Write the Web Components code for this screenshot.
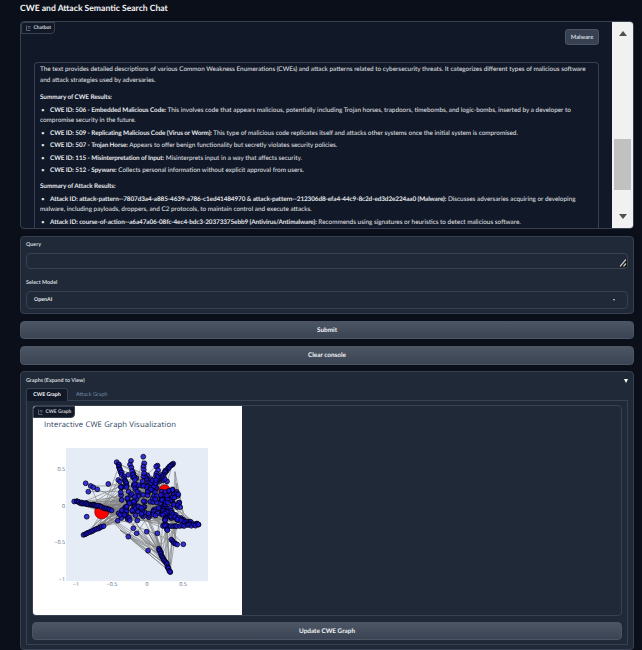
<!DOCTYPE html>
<html>
<head>
<meta charset="utf-8">
<title>CWE and Attack Semantic Search Chat</title>
<style>
  html, body { margin: 0; padding: 0; height: 650px; overflow: hidden; background: #0b0f19; }
  body { font-family: Lato, sans-serif; color: #e5e7eb; text-rendering: geometricPrecision; }
</style>
</head>
<body>
<search-app></search-app>

<script>
// small base class so every element just declares its css + markup
class ShadowEl extends HTMLElement {
  constructor() {
    super();
    this.shadow = this.attachShadow({ mode: 'open' });
  }
  connectedCallback() {
    this.shadow.innerHTML = `<style>${this.css()}</style>${this.html()}`;
  }
  css() { return ''; }
  html() { return '<slot></slot>'; }
}

class GrButton extends ShadowEl {
  css() {
    return `
      :host { display: block; }
      button {
        display: block; width: 100%; height: var(--h, 18px); padding: 0;
        font: 700 6.4px Lato, sans-serif; color: #f3f4f6; text-rendering: geometricPrecision;
        background: linear-gradient(to bottom, #4b5563, #3a4454);
        border: 1px solid #4b5563; border-radius: 4px;
      }
    `;
  }
  html() { return '<button><slot></slot></button>'; }
}

class GrLabelBadge extends ShadowEl {
  css() {
    return `
      :host {
        position: absolute; left: 0; top: 0; z-index: 2; display: flex; align-items: center; gap: 2.5px;
        box-sizing: border-box; height: 12px; padding: 0 3px 0 4px;
        background: #111827; border: 1px solid #374151;
        border-radius: 3px 0 4px 0;
        font: 700 4.9px Lato, sans-serif; color: #d1d5db;
      }
      svg { width: 5px; height: 6px; }
    `;
  }
  html() {
    return `<svg viewBox="0 0 5 6"><path d="M.5.5v5h4M1.8 1.5h2.7M1.8 3h2.7" fill="none" stroke="#6b7280" stroke-width=".8"/></svg><slot></slot>`;
  }
}

class ChatMessage extends ShadowEl {
  css() {
    return `
      :host {
        display: block; box-sizing: border-box; padding: 1px 5px 0;
        border: 1px solid #374151; border-bottom: 0; border-radius: 4px 4px 0 0;
        font: 400 6.4px/11px Lato, sans-serif; color: #e5e7eb;
        flex: 1; overflow: hidden;
      }
    `;
  }
}

class ChatPanel extends ShadowEl {
  css() {
    return `
      :host {
        display: flex; position: relative; height: 208px; box-sizing: border-box;
        background: #111827; border: 1px solid #374151; border-radius: 4px; overflow: hidden;
      }
      .body { flex: 1; display: flex; flex-direction: column; padding: 7px 13px 0 13px; min-width: 0; }
      .tools { display: flex; justify-content: flex-end; margin-bottom: 17px; }
      .tag {
        display: flex; align-items: center; justify-content: center;
        width: 34px; height: 16px; box-sizing: border-box;
        background: #374151; border: 1px solid #4b5563; border-radius: 3px;
        font: 700 5.8px Lato, sans-serif; color: #d1d5db;
      }
      .bar { width: 21px; flex: none; background: #f1f1f1; display: flex; flex-direction: column; align-items: center; }
      .arrow { width: 0; height: 0; border-left: 4.5px solid transparent; border-right: 4.5px solid transparent; }
      .up { border-bottom: 5px solid #505050; margin-top: 9px; }
      .down { border-top: 5px solid #505050; margin-top: 24px; }
      .thumb { width: 17px; height: 51px; background: #c1c1c1; margin-top: 103px; }
    `;
  }
  html() {
    return `
      <gr-label-badge><span>Chatbot</span></gr-label-badge>
      <div class="body">
        <div class="tools"><div class="tag">Malware</div></div>
        <slot></slot>
      </div>
      <div class="bar">
        <div class="arrow up"></div>
        <div class="thumb"></div>
        <div class="arrow down"></div>
      </div>
    `;
  }
}

class GrField extends ShadowEl {
  css() {
    return `
      :host { display: block; }
      label { display: block; font: 700 5.4px/8px Lato, sans-serif; color: #d1d5db; margin-bottom: 4px; }
      .box {
        display: flex; align-items: center; justify-content: space-between; position: relative;
        box-sizing: border-box; height: var(--h, 18px); padding: 0 7px;
        border: 1px solid #374151; border-radius: 4px; background: #1f2937;
        font: 700 5.3px Lato, sans-serif; color: #e5e7eb;
      }
      .caret { width: 0; height: 0; border-left: 1.8px solid transparent; border-right: 1.8px solid transparent; border-top: 2px solid #d1d5db; margin-right: 5px; }
      svg { position: absolute; right: 0; bottom: 1px; width: 10px; height: 9px; }
    `;
  }
  html() {
    const isSelect = this.hasAttribute('select');
    return `
      <label>${this.getAttribute('label')}</label>
      <div class="box">
        <span>${this.getAttribute('value') || ''}</span>
        ${isSelect ? '<div class="caret"></div>' :
          `<svg viewBox="0 0 10 9"><path d="M10 0v9H1z" fill="#111"/><path d="M3 8.5 9 1.5M6.5 8.5 9 5.5" stroke="#c8c8c8" stroke-width="1.2" fill="none"/></svg>`}
      </div>
    `;
  }
}

class GrCard extends ShadowEl {
  css() {
    return `
      :host {
        display: block; box-sizing: border-box; position: relative;
        background: #1f2937; border: 1px solid #374151; border-radius: 4px;
      }
    `;
  }
}

class GraphAccordion extends ShadowEl {
  css() {
    return `
      :host {
        display: flex; flex-direction: column; box-sizing: border-box; flex: 1; min-height: 0;
        background: #1f2937; border: 1px solid #374151; border-radius: 4px; padding: 3px 5px 4px;
      }
      .head { display: flex; justify-content: space-between; align-items: center; height: 11px; margin-bottom: 2px; font: 700 5.4px Lato, sans-serif; color: #d1d5db; }
      .tri { width: 0; height: 0; border-left: 2.8px solid transparent; border-right: 2.8px solid transparent; border-top: 4px solid #fff; }
      .tabs { display: flex; height: 13px; position: relative; z-index: 1; }
      .tab { display: flex; align-items: center; font: 700 5.2px Lato, sans-serif; }
      .tab.on { width: 42px; box-sizing: border-box; justify-content: center; height: 13px; background: #111827; color: #f9fafb; border: 1px solid #374151; border-bottom: 0; border-radius: 3px 3px 0 0; }
      .tab.off { color: #7088a8; font-size: 5.5px; font-weight: 400; padding-left: 8px; }
      .panel { flex: 1; box-sizing: border-box; border: 1px solid #374151; padding: 4px 5px 4px; display: flex; flex-direction: column; gap: 6px; margin-top: -1px; }
      .gallery { position: relative; height: 211px; box-sizing: border-box; border: 1px solid #374151; border-radius: 4px; overflow: hidden; }
    `;
  }
  html() {
    return `
      <div class="head"><span>Graphs (Expand to View)</span><div class="tri"></div></div>
      <div class="tabs"><div class="tab on">CWE Graph</div><div class="tab off">Attack Graph</div></div>
      <div class="panel">
        <div class="gallery">
          <gr-label-badge><span>CWE Graph</span></gr-label-badge>
          <slot></slot>
        </div>
        <gr-button style="--h:18px">Update CWE Graph</gr-button>
      </div>
    `;
  }
}

// the plotly figure, nodes are laid out from the strands seen in the graph
class CwePlot extends ShadowEl {
  css() {
    return `
      :host { display: block; width: 209px; height: 209px; background: #fff; }
      svg { display: block; }
      text { font-family: "Open Sans", "DejaVu Sans", sans-serif; }
    `;
  }
  html() {
    // deterministic rng
    let seed = 4217;
    const rnd = () => { seed = (seed * 16807) % 2147483647; return seed / 2147483647; };
    const pts = [];
    // coordinates below were read off a 3x crop, Z brings them to plot box px
    const Z = (p) => [p[0] / 3 - 46, p[1] / 3 - 48];
    const strand = (x1, y1, x2, y2, n, j) => {
      for (let i = 0; i < n; i++) {
        const t = n > 1 ? i / (n - 1) : 0;
        pts.push([x1 + (x2 - x1) * t + (rnd() - .5) * j, y1 + (y2 - y1) * t + (rnd() - .5) * j]);
      }
    };
    const blob = (cx, cy, rx, ry, n) => {
      for (let i = 0; i < n; i++) {
        const a = rnd() * Math.PI * 2, r = Math.sqrt(rnd());
        pts.push([cx + Math.cos(a) * r * rx, cy + Math.sin(a) * r * ry]);
      }
    };
    blob(395, 290, 75, 65, 95);
    blob(335, 340, 42, 24, 30);
    blob(330, 265, 30, 50, 22);
    blob(445, 305, 40, 40, 50);
    strand(165, 305, 232, 316, 22, 5);
    strand(232, 316, 275, 332, 10, 3);
    strand(190, 405, 250, 378, 13, 2);
    strand(292, 185, 320, 260, 16, 7);
    strand(330, 185, 345, 240, 7, 6);
    strand(458, 190, 405, 250, 22, 4);
    strand(412, 195, 410, 240, 7, 6);
    strand(372, 190, 372, 220, 4, 3);
    strand(440, 345, 535, 375, 28, 9);
    strand(430, 380, 535, 375, 16, 5);
    strand(425, 335, 480, 355, 16, 12);
    strand(430, 345, 440, 390, 12, 10);
    strand(415, 445, 450, 515, 18, 4);
    strand(455, 420, 470, 435, 5, 3);
    [[370,170],[197,250],[212,258],[220,262],[232,268],[205,275],[265,252],[200,350],[325,410],
     [384,452],[490,433],[350,400],[412,400],[380,395],[295,240],[300,245],[475,283],[450,515],
     [293,362],[340,385],[300,345],[305,300],[320,320]].forEach(p => pts.push(p));

    // keep the two red hubs readable, only a node or two sits on them
    const hubA = [245, 336], hubB = [434, 272];
    const clear = (p, h, r) => Math.hypot(p[0] - h[0], p[1] - h[1]) > r;
    const nodes = pts.filter(p => clear(p, [438, 266], 10) && clear(p, [248, 345], 10)).map(Z);
    const centre = nodes.slice(0, 140);

    const line = (a, b) => `<path d="M${a[0].toFixed(1)} ${a[1].toFixed(1)}L${b[0].toFixed(1)} ${b[1].toFixed(1)}"/>`;
    let edges = '';
    nodes.forEach((n, i) => {
      if (i % 3 === 0) edges += line(n, Z(i % 2 === 0 ? hubA : hubB));
      if (i % 2 === 0) edges += line(n, centre[Math.floor(rnd() * centre.length)]);
    });
    // the visible fans: lower left corner, bottom strand, right side
    [[190,405],[200,400],[215,395],[250,378]].forEach(a =>
      [[300,330],[290,350],[330,345],[270,330]].forEach(b => { edges += line(Z(a), Z(b)); }));
    [[450,515],[440,495],[425,465],[415,445]].forEach(a =>
      [[325,410],[350,395],[380,390],[405,395],[440,390],[470,380],[300,390]].forEach(b => { edges += line(Z(a), Z(b)); }));
    [[465,215],[470,250]].forEach(a =>
      [[490,340],[470,330],[450,515]].forEach(b => { edges += line(Z(a), Z(b)); }));

    const circles = nodes.map(n =>
      `<circle cx="${n[0].toFixed(1)}" cy="${n[1].toFixed(1)}" r="2.4"/>`).join('');
    const A = Z(hubA), B = Z(hubB);
    return `
      <svg width="209" height="209" viewBox="0 0 209 209">
        <text x="11" y="20.5" font-size="7.7" fill="#2a3f5f" letter-spacing=".13">Interactive CWE Graph Visualization</text>
        <g transform="translate(33,42)">
          <rect width="142" height="133" fill="#e5ecf6"/>
          <g stroke="#808080" stroke-width=".65">${edges}</g>
          <circle cx="${A[0]}" cy="${A[1]}" r="7" fill="#f00" stroke="#600" stroke-width=".6"/>
          <circle cx="${B[0]}" cy="${B[1]}" r="5.8" fill="#f00" stroke="#600" stroke-width=".6"/>
          <g fill="#1a14d8" stroke="#000010" stroke-width=".8" fill-opacity=".85">${circles}</g>
        </g>
        <g font-size="5.4" fill="#506784">
          <g text-anchor="end">
            <text x="32" y="65">0.5</text>
            <text x="32" y="102">0</text>
            <text x="32" y="138">−0.5</text>
            <text x="32" y="175">−1</text>
          </g>
          <g text-anchor="middle">
            <text x="43" y="180">−1</text>
            <text x="79" y="180">−0.5</text>
            <text x="114" y="180">0</text>
            <text x="150" y="180">0.5</text>
          </g>
        </g>
      </svg>
    `;
  }
}

class SearchApp extends ShadowEl {
  css() {
    return `
      :host { display: flex; flex-direction: column; width: 614px; height: 650px; margin-left: 20px; box-sizing: border-box; }
      h1 { margin: 0; height: 21px; font: 700 8.6px/16px Lato, sans-serif; color: #f3f4f6; }
      .stack { display: flex; flex-direction: column; flex: 1; min-height: 0; }
      .fields { height: 78px; padding: 4px 5px 0; display: flex; flex-direction: column; gap: 10px; margin: 7px 0 7px; }
      p { margin: 0; }
      p.lead { margin-bottom: 7px; }
      p.h { font-weight: 700; letter-spacing: -.08px; line-height: 10px; margin-bottom: 3px; }
      ul { list-style: none; margin: 0 0 6px; padding: 0; }
      li { line-height: 10px; margin-bottom: 2.6px; }
      li::before { content: "•"; display: inline-block; width: 10px; text-indent: 1px; }
      b { font-weight: 700; letter-spacing: -.1px; }
    `;
  }
  html() {
    return `
      <h1>CWE and Attack Semantic Search Chat</h1>
      <div class="stack">
        <chat-panel>
          <chat-message>
            <p class="lead">The text provides detailed descriptions of various Common Weakness Enumerations (CWEs) and attack patterns related to cybersecurity threats. It categorizes different types of malicious software and attack strategies used by adversaries.</p>
            <p class="h">Summary of CWE Results:</p>
            <ul>
              <li><b>CWE ID: 506 - Embedded Malicious Code:</b> <span>This involves code that appears malicious, potentially including Trojan horses, trapdoors, timebombs, and logic-bombs, inserted by a developer to</span><br><span>compromise security in the future.</span></li>
              <li><b>CWE ID: 509 - Replicating Malicious Code (Virus or Worm):</b> This type of malicious code replicates itself and attacks other systems once the initial system is compromised.</li>
              <li><b>CWE ID: 507 - Trojan Horse:</b> Appears to offer benign functionality but secretly violates security policies.</li>
              <li><b>CWE ID: 115 - Misinterpretation of Input:</b> Misinterprets input in a way that affects security.</li>
              <li><b>CWE ID: 512 - Spyware:</b> Collects personal information without explicit approval from users.</li>
            </ul>
            <p class="h">Summary of Attack Results:</p>
            <ul>
              <li><b>Attack ID: attack-pattern--7807d3a4-a885-4639-a786-c1ed41484970 &amp; attack-pattern--212306d8-efa4-44c9-8c2d-ed3d2e224aa0 (Malware):</b> <span>Discusses adversaries acquiring or developing</span><br><span>malware, including payloads, droppers, and C2 protocols, to maintain control and execute attacks.</span></li>
              <li><b>Attack ID: course-of-action--a6a47a06-08fc-4ec4-bdc3-20373375ebb9 (Antivirus/Antimalware):</b> Recommends using signatures or heuristics to detect malicious software.</li>
            </ul>
          </chat-message>
        </chat-panel>
        <gr-card class="fields">
          <gr-field label="Query" style="--h:16px"></gr-field>
          <gr-field label="Select Model" value="OpenAI" select style="--h:18px"></gr-field>
        </gr-card>
        <gr-button style="--h:18px; margin-bottom:7px">Submit</gr-button>
        <gr-button style="--h:19px; margin-bottom:6px">Clear console</gr-button>
        <graph-accordion><cwe-plot></cwe-plot></graph-accordion>
      </div>
    `;
  }
}

customElements.define('gr-button', GrButton);
customElements.define('gr-label-badge', GrLabelBadge);
customElements.define('chat-message', ChatMessage);
customElements.define('chat-panel', ChatPanel);
customElements.define('gr-field', GrField);
customElements.define('gr-card', GrCard);
customElements.define('cwe-plot', CwePlot);
customElements.define('graph-accordion', GraphAccordion);
customElements.define('search-app', SearchApp);
</script>
</body>
</html>
